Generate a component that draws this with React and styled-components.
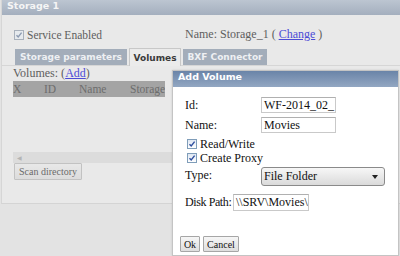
import React from 'react';
import styled, { createGlobalStyle } from 'styled-components';

const Global = createGlobalStyle`
  html, body { margin: 0; padding: 0; }
  body {
    width: 400px; height: 256px; overflow: hidden;
    background: #e3e3e3;
    font-family: "Liberation Serif", "Times New Roman", serif;
  }
`;

const Page = styled.div`
  position: relative;
  width: 400px;
  height: 256px;
  overflow: hidden;
  background: #e3e3e3;
`;

const Panel = styled.section`
  margin-left: 1px;
  width: 420px;
  height: 204px;
  box-sizing: border-box;
  background: #e9e9e9;
  border-left: 1px solid #d6d6d6;
  border-bottom: 1px solid #d4d4d4;
  display: flex;
  flex-direction: column;
`;

const TitleBar = styled.div`
  height: 15px;
  line-height: 15px;
  padding-left: 5px;
  background: linear-gradient(#bcc5d1, #a4afbe);
  color: #f5f5f5;
  font: bold 9.5px "DejaVu Sans", Verdana, sans-serif;
`;

const HeaderRow = styled.div`
  display: grid;
  grid-template-columns: 171px auto;
  align-items: center;
  margin-top: 12px;
  padding-left: 12px;
  height: 14px;
  font-size: 12px;
  color: #5e5e5e;
  white-space: nowrap;
`;

const CheckLabel = styled.label`
  display: flex;
  align-items: center;
  gap: 3px;
  height: 14px;
  font-size: ${p => p.$size || 12}px;
  color: ${p => p.$muted ? '#5e5e5e' : '#111'};
  margin-left: ${p => p.$indent || 0}px;
  white-space: nowrap;
`;

const Box = styled.span`
  width: 10px;
  height: 10px;
  flex-shrink: 0;
  box-sizing: border-box;
  display: inline-flex;
  align-items: center;
  justify-content: center;
  border: 1px solid ${p => p.$muted ? '#a9b1bc' : '#7f9db9'};
  background: ${p => p.$muted ? '#e6eaee' : 'linear-gradient(#dfe7f3, #ffffff)'};
`;

const Link = styled.a`
  color: ${p => p.$muted ? '#4c4cd6' : '#2222cc'};
  text-decoration: underline;
`;

const TabBar = styled.div`
  display: flex;
  align-items: flex-end;
  gap: 2px;
  margin-top: 6px;
  padding-left: 13px;
  height: 18px;
  border-bottom: 1px solid #d6d6d6;
`;

const Tab = styled.div`
  width: ${p => p.$w}px;
  height: ${p => p.$active ? 18 : 16}px;
  box-sizing: border-box;
  display: flex;
  align-items: center;
  justify-content: center;
  white-space: nowrap;
  font: bold 9px "DejaVu Sans", Verdana, sans-serif;
  color: ${p => p.$active ? '#3a3a3a' : '#eef0f3'};
  background: ${p => p.$active ? '#ebebeb' : '#a3adba'};
  border: ${p => p.$active ? '1px solid #c8c8c8' : 'none'};
  border-bottom: none;
  margin-bottom: ${p => p.$active ? -1 : 0}px;
  padding-top: ${p => p.$active ? 1 : 0}px;
`;

const Content = styled.div`
  display: flex;
  flex-direction: column;
  align-items: flex-start;
  padding-left: 11px;
  padding-top: 1px;
`;

const Caption = styled.div`
  font-size: 12px;
  line-height: 13px;
  height: 13px;
  color: #5e5e5e;
  white-space: nowrap;
`;

const TableHead = styled.div`
  display: grid;
  grid-template-columns: 31px 35px 51px auto;
  width: 152px;
  height: 16px;
  line-height: 16px;
  margin-top: 1px;
  background: #a4a4a4;
  color: #6d6d6d;
  font-size: 11.5px;
  overflow: hidden;
  white-space: nowrap;
`;

const ScrollBar = styled.div`
  width: 175px;
  height: 11px;
  margin-top: 55px;
  background: #dcdcdc;
  display: flex;
  align-items: center;
  padding-left: 4px;
  box-sizing: border-box;
  color: #b4b4b4;
  font: 6px "DejaVu Sans", sans-serif;
`;

const Button = styled.button`
  height: ${p => p.$h || 16}px;
  width: ${p => p.$w}px;
  padding: 0;
  margin-left: ${p => p.$ml || 0}px;
  box-sizing: border-box;
  white-space: nowrap;
  border: 1px solid ${p => p.$muted ? '#c2c2c2' : '#a6a6a6'};
  border-radius: 1px;
  background: ${p => p.$muted ? 'linear-gradient(#e8e8e8, #dcdcdc)' : 'linear-gradient(#f6f6f6, #dedede)'};
  color: ${p => p.$muted ? '#6a6a6a' : '#111'};
  font: 10px "Liberation Serif", "Times New Roman", serif;
`;

const Dialog = styled.div`
  position: absolute;
  left: 172px;
  top: 70px;
  width: 227px;
  height: 186px;
  box-sizing: border-box;
  background: #ffffff;
  border: 1px solid #c4c4c4;
  box-shadow: 0 0 2px rgba(0, 0, 0, 0.12);
  display: flex;
  flex-direction: column;
`;

const DialogTitle = styled.div`
  height: 16px;
  flex-shrink: 0;
  line-height: 16px;
  padding-left: 5px;
  background: linear-gradient(#6a84a8, #93a7c2);
  color: #ffffff;
  font: bold 9.5px "DejaVu Sans", Verdana, sans-serif;
`;

const DialogBody = styled.div`
  display: flex;
  flex-direction: column;
  padding: 10px 0 0 12px;
`;

const FormRow = styled.div`
  display: flex;
  align-items: ${p => p.$top ? 'flex-start' : 'center'};
  margin-top: ${p => p.$mt || 0}px;
`;

const Label = styled.span`
  width: ${p => p.$w}px;
  flex-shrink: 0;
  white-space: nowrap;
  font-size: 12px;
  letter-spacing: ${p => p.$tight ? '-0.4px' : 'normal'};
  color: #111;
  padding-top: ${p => p.$pt || 0}px;
`;

const Input = styled.div`
  width: ${p => p.$w}px;
  height: ${p => p.$h || 16}px;
  flex-shrink: 0;
  box-sizing: border-box;
  border: 1px solid #c9c9c9;
  border-top-color: #b0b0b0;
  padding: 0 2px;
  font-size: 12px;
  line-height: ${p => (p.$h || 16) - 2}px;
  color: #111;
  white-space: nowrap;
  overflow: hidden;
  background: #fff;
`;

const Select = styled.div`
  width: 124px;
  height: 19px;
  box-sizing: border-box;
  border: 1px solid #8a8a8a;
  border-radius: 3px;
  background: linear-gradient(#f7f7f7, #dadada);
  display: flex;
  align-items: center;
  justify-content: space-between;
  padding: 0 6px 0 2px;
  font-size: 12px;
  color: #111;
`;

const ButtonRow = styled.div`
  display: flex;
  gap: 3px;
  margin-top: 25px;
  margin-left: -5px;
`;

const Check = ({ muted }) => (
  <Box $muted={muted}>
    <svg width="8" height="8" viewBox="0 0 8 8">
      <path d="M1.5 4.2 L3.2 6 L6.6 1.6" fill="none" stroke={muted ? '#8d9bb2' : '#2f4f9f'} strokeWidth="1.4" />
    </svg>
  </Box>
);

export default function App() {
  return (
    <Page>
      <Global />
      <Panel>
        <TitleBar>Storage 1</TitleBar>
        <HeaderRow>
          <CheckLabel $muted $size={11.5}><Check muted />Service Enabled</CheckLabel>
          <span>Name: Storage_1 ( <Link $muted href="#">Change</Link> )</span>
        </HeaderRow>
        <TabBar>
          <Tab $w={112}>Storage parameters</Tab>
          <Tab $w={52} $active>Volumes</Tab>
          <Tab $w={84}>BXF Connector</Tab>
        </TabBar>
        <Content>
          <Caption>Volumes: (<Link $muted href="#">Add</Link>)</Caption>
          <TableHead>
            <span>X</span><span>ID</span><span>Name</span><span>Storage</span>
          </TableHead>
          <ScrollBar>◀</ScrollBar>
          <Button $muted $w={68} $h={17} $ml={1}>Scan directory</Button>
        </Content>
      </Panel>
      <Dialog>
        <DialogTitle>Add Volume</DialogTitle>
        <DialogBody>
          <FormRow>
            <Label $w={76}>Id:</Label>
            <Input $w={75}>WF-2014_02_</Input>
          </FormRow>
          <FormRow $mt={4}>
            <Label $w={76}>Name:</Label>
            <Input $w={75}>Movies</Input>
          </FormRow>
          <FormRow $mt={4}>
            <CheckLabel $indent={2}><Check />Read/Write</CheckLabel>
          </FormRow>
          <FormRow>
            <CheckLabel $indent={2}><Check />Create Proxy</CheckLabel>
          </FormRow>
          <FormRow $top $mt={2}>
            <Label $w={76} $pt={1}>Type:</Label>
            <Select>
              <span>File Folder</span>
              <svg width="6" height="4" viewBox="0 0 6 4"><path d="M0 0 H6 L3 4 Z" fill="#222" /></svg>
            </Select>
          </FormRow>
          <FormRow $mt={8}>
            <Label $w={48} $tight>Disk Path:</Label>
            <Input $w={76} $h={17}>\\SRV\Movies\Storage</Input>
          </FormRow>
          <ButtonRow>
            <Button $w={20}>Ok</Button>
            <Button $w={36}>Cancel</Button>
          </ButtonRow>
        </DialogBody>
      </Dialog>
    </Page>
  );
}
